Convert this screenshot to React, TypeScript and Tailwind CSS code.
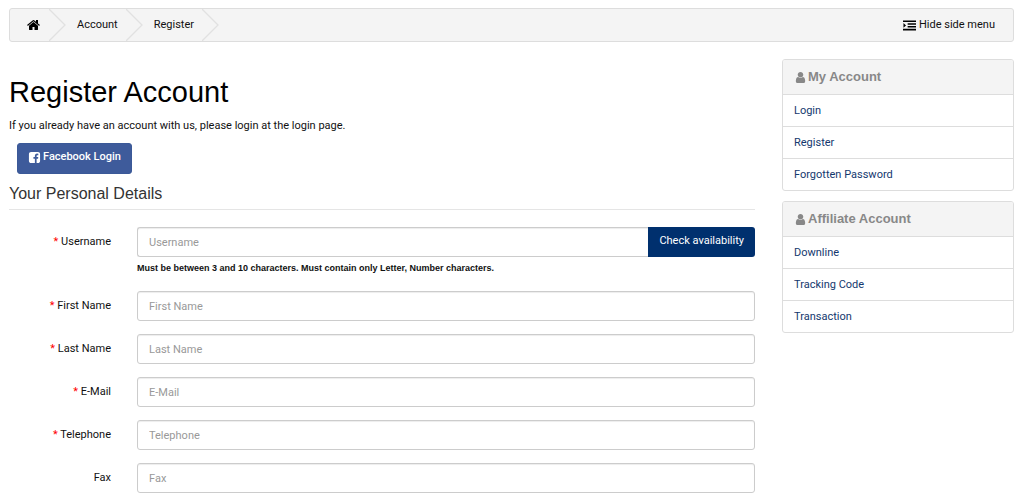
import { ReactNode } from "react";

interface Field {
  id: string;
  label: string;
  type: string;
  required: boolean;
}

interface MenuProps {
  title: string;
  links: string[];
}

const fields: Field[] = [
  { id: "firstname", label: "First Name", type: "text", required: true },
  { id: "lastname", label: "Last Name", type: "text", required: true },
  { id: "email", label: "E-Mail", type: "email", required: true },
  { id: "telephone", label: "Telephone", type: "tel", required: true },
  { id: "fax", label: "Fax", type: "text", required: false },
];

const inputClass =
  "h-[30px] w-full min-w-0 border border-[#ccc] bg-white px-[11px] text-[11px] text-[#555] shadow-[inset_0_1px_1px_rgba(0,0,0,0.075)] outline-none placeholder:text-[#999] focus:border-[#66afe9]";

function Icon({ d, className }: { d: string; className: string }) {
  return (
    <svg viewBox="0 0 1792 1792" fill="currentColor" aria-hidden="true" className={className}>
      <path d={d} />
    </svg>
  );
}

const homePath =
  "M1408 992v480q0 26-19 45t-45 19h-384v-384h-256v384h-384q-26 0-45-19t-19-45v-480q0-1 .5-3t.5-3l575-474 575 474q1 2 1 6zm223-69l-62 74q-8 9-21 11h-3q-13 0-21-7l-692-577-692 577q-12 8-24 7-13-2-21-11l-62-74q-8-10-7-23.5t11-21.5l719-599q32-26 76-26t76 26l244 204v-195q0-14 9-23t23-9h192q14 0 23 9t9 23v408l219 182q10 8 11 21.5t-7 23.5z";
const userPath =
  "M1536 1399q0 109-62.5 187t-150.5 78h-854q-88 0-150.5-78t-62.5-187q0-85 8.5-160.5t31.5-152 58.5-131 94-89 134.5-34.5q131 128 313 128t313-128q76 0 134.5 34.5t94 89 58.5 131 31.5 152 8.5 160.5zm-256-887q0 159-112.5 271.5t-271.5 112.5-271.5-112.5-112.5-271.5 112.5-271.5 271.5-112.5 271.5 112.5 112.5 271.5z";
const facebookPath =
  "M1376 128q119 0 203.5 84.5t84.5 203.5v960q0 119-84.5 203.5t-203.5 84.5h-188v-595h199l30-232h-229v-148q0-56 23.5-84t91.5-28l122-1v-207q-63-9-178-9-136 0-217.5 80t-81.5 226v171h-200v232h200v595h-532q-119 0-203.5-84.5t-84.5-203.5v-960q0-119 84.5-203.5t203.5-84.5h960z";
const indentPath =
  "M0 192h1792v224H0zM640 576h1152v224H640zM640 960h1152v224H640zM0 1344h1792v224H0zM64 560l352 320-352 320z";

function Crumb({ children }: { children: ReactNode }) {
  return (
    <li className="flex items-center">
      {children}
      <svg viewBox="0 0 17 32" fill="none" aria-hidden="true" className="ml-2 h-8 w-[17px]">
        <path d="M0 0L16 16L0 32" stroke="#e1e1e1" strokeWidth="1.3" />
      </svg>
    </li>
  );
}

function SideMenu({ title, links }: MenuProps) {
  return (
    <nav className="overflow-hidden rounded-[3px] border border-[#ddd]">
      <h2 className="flex h-[34px] items-center gap-px bg-[#f4f4f4] px-[11px] font-['Liberation_Sans',Arial,sans-serif] text-[13px] font-bold text-[#888]">
        <Icon d={userPath} className="size-[13px]" />
        {title}
      </h2>
      <ul>
        {links.map((link) => (
          <li key={link} className="border-t border-[#ddd]">
            <a href="#" className="block px-[11px] py-2 leading-[15px] text-[#14386e] hover:bg-[#f5f5f5]">
              {link}
            </a>
          </li>
        ))}
      </ul>
    </nav>
  );
}

function FieldLabel({ id, label, required }: { id: string; label: string; required: boolean }) {
  return (
    <label htmlFor={id} className="w-[102px] shrink-0 text-right leading-[30px]">
      {required && <span className="text-[#f00]">* </span>}
      {label}
    </label>
  );
}

export default function App() {
  return (
    <div className="bg-white py-2 pr-[10px] pl-[9px] font-[Roboto,Arial,sans-serif] text-[11px] leading-4 text-[#111]">
      <header className="flex items-center justify-between rounded-[3px] border border-[#ddd] bg-[#f4f4f4] pr-[18px] pl-[17px]">
        <ol className="flex items-center gap-[11px]">
          <Crumb>
            <a href="#" aria-label="Home">
              <Icon d={homePath} className="size-[14px] text-black" />
            </a>
          </Crumb>
          <Crumb>
            <a href="#">Account</a>
          </Crumb>
          <Crumb>
            <a href="#">Register</a>
          </Crumb>
        </ol>
        <button type="button" className="flex items-center gap-[3px]">
          <Icon d={indentPath} className="size-[13px] text-black" />
          Hide side menu
        </button>
      </header>

      <div className="mt-[17px] flex items-start gap-[27px]">
        <main className="min-w-0 flex-1 pt-[15px]">
          <h1 className="font-['Liberation_Sans',Arial,sans-serif] text-[29px] leading-9 text-black">
            Register Account
          </h1>
          <p className="mt-2">
            If you already have an account with us, please login at the login page.
          </p>
          <button
            type="button"
            className="mt-[9px] ml-2 flex h-[31px] items-center gap-[2px] rounded-[3px] border border-[#3b5998] bg-[#3e5b9b] px-[10px] pb-[3px] font-medium text-white"
          >
            <Icon d={facebookPath} className="size-[13px]" />
            Facebook Login
          </button>

          <form className="mt-2">
            <fieldset>
              <legend className="w-full border-b border-[#e5e5e5] pb-[3px] font-['Liberation_Sans',Arial,sans-serif] text-[16px] leading-6 text-[#333]">
                Your Personal Details
              </legend>

              <div className="mt-[17px] flex gap-[26px]">
                <FieldLabel id="username" label="Username" required />
                <div className="min-w-0 flex-1">
                  <div className="flex">
                    <input
                      id="username"
                      type="text"
                      placeholder="Username"
                      className={`${inputClass} rounded-l-[3px] border-r-0`}
                    />
                    <button
                      type="button"
                      className="h-[30px] shrink-0 rounded-r-[3px] bg-[#00306e] px-[11px] pb-[2px] text-white"
                    >
                      Check availability
                    </button>
                  </div>
                  <p className="mt-1 font-['Liberation_Sans',Arial,sans-serif] text-[9px] leading-[14px] font-bold">
                    Must be between 3 and 10 characters. Must contain only Letter, Number characters.
                  </p>
                </div>
              </div>

              <div className="mt-4 space-y-[13px]">
                {fields.map((field) => (
                  <div key={field.id} className="flex gap-[26px]">
                    <FieldLabel id={field.id} label={field.label} required={field.required} />
                    <input
                      id={field.id}
                      type={field.type}
                      placeholder={field.label}
                      className={`${inputClass} flex-1 rounded-[3px]`}
                    />
                  </div>
                ))}
              </div>
            </fieldset>
          </form>
        </main>

        <aside className="w-[232px] shrink-0 space-y-[10px]">
          <SideMenu title="My Account" links={["Login", "Register", "Forgotten Password"]} />
          <SideMenu title="Affiliate Account" links={["Downline", "Tracking Code", "Transaction"]} />
        </aside>
      </div>
    </div>
  );
}
